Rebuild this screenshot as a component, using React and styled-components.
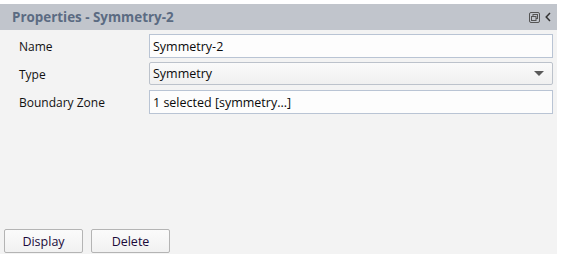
import React from "react";
import styled, { createGlobalStyle } from "styled-components";

const Global = createGlobalStyle`
  html, body { margin: 0; padding: 0; background: #ffffff; }
  body { font-family: "Open Sans", "Noto Sans", sans-serif; }
`;

const Panel = styled.div`
  width: 557px;
  padding-top: 4px;
  display: flex;
  flex-direction: column;
`;

const Header = styled.div`
  height: 26px;
  background: #c1c5cc;
  display: flex;
  align-items: center;
  padding: 0 6px 0 12px;
  box-sizing: border-box;
`;

const Title = styled.div`
  flex: 1;
  font-family: "Open Sans", sans-serif;
  font-weight: 700;
  font-size: 13.4px;
  color: #5b6b82;
  letter-spacing: 0;
`;

const HeaderIcons = styled.div`
  display: flex;
  align-items: center;
  gap: 5px;
`;

const Body = styled.div`
  height: 224px;
  background: #f3f3f3;
  display: flex;
  flex-direction: column;
  justify-content: space-between;
`;

const Form = styled.div`
  display: grid;
  grid-template-columns: 130px 1fr;
  row-gap: 4px;
  padding: 4px 4px 0 19px;
`;

const Label = styled.div`
  font-size: 12px;
  color: #111;
  display: flex;
  align-items: center;
  height: 24px;
`;

const Field = styled.div`
  height: 24px;
  box-sizing: border-box;
  border: 1px solid #b9c4d4;
  background: #fdfdfd;
  font-size: 12.5px;
  color: #0a0a0a;
  display: flex;
  align-items: center;
  padding: 0 3px;
`;

const Select = styled(Field)`
  height: 23px;
  border-radius: 2px;
  border-color: #bcc2cb;
  background: linear-gradient(#fafafa, #f0f0f0);
  justify-content: space-between;
  padding-right: 8px;
`;

const Caret = styled.span`
  width: 0;
  height: 0;
  border-left: 5px solid transparent;
  border-right: 5px solid transparent;
  border-top: 5px solid #5a5a5a;
`;

const Buttons = styled.div`
  display: flex;
  gap: 8px;
  padding: 0 0 1px 4px;
`;

const Button = styled.button`
  width: 79px;
  height: 24px;
  box-sizing: border-box;
  border: 1px solid #b4b4b4;
  border-radius: 2px;
  background: linear-gradient(#fbfbfb, #f1f1f1);
  font-family: "Open Sans", sans-serif;
  font-size: 12.5px;
  color: #1a0a3a;
  padding: 0;
`;

export default function App() {
  return (
    <>
      <Global />
      <Panel>
        <Header>
          <Title>Properties - Symmetry-2</Title>
          <HeaderIcons>
            <svg width="11" height="11" viewBox="0 0 11 11">
              <rect x="0.5" y="0.5" width="10" height="10" rx="1.5" fill="none" stroke="#555" strokeWidth="1" />
              <rect x="4" y="2.5" width="4.5" height="4" fill="none" stroke="#555" strokeWidth="1" />
              <rect x="2.5" y="4.5" width="4.5" height="4" fill="#c1c5cc" stroke="#555" strokeWidth="1" />
            </svg>
            <svg width="6" height="10" viewBox="0 0 6 10">
              <path d="M5 1 L1.2 5 L5 9" fill="none" stroke="#333" strokeWidth="1.5" />
            </svg>
          </HeaderIcons>
        </Header>
        <Body>
          <Form>
            <Label>Name</Label>
            <Field>Symmetry-2</Field>
            <Label>Type</Label>
            <Select>
              <span>Symmetry</span>
              <Caret />
            </Select>
            <Label>Boundary Zone</Label>
            <Field>1 selected [symmetry...]</Field>
          </Form>
          <Buttons>
            <Button>Display</Button>
            <Button>Delete</Button>
          </Buttons>
        </Body>
      </Panel>
    </>
  );
}
